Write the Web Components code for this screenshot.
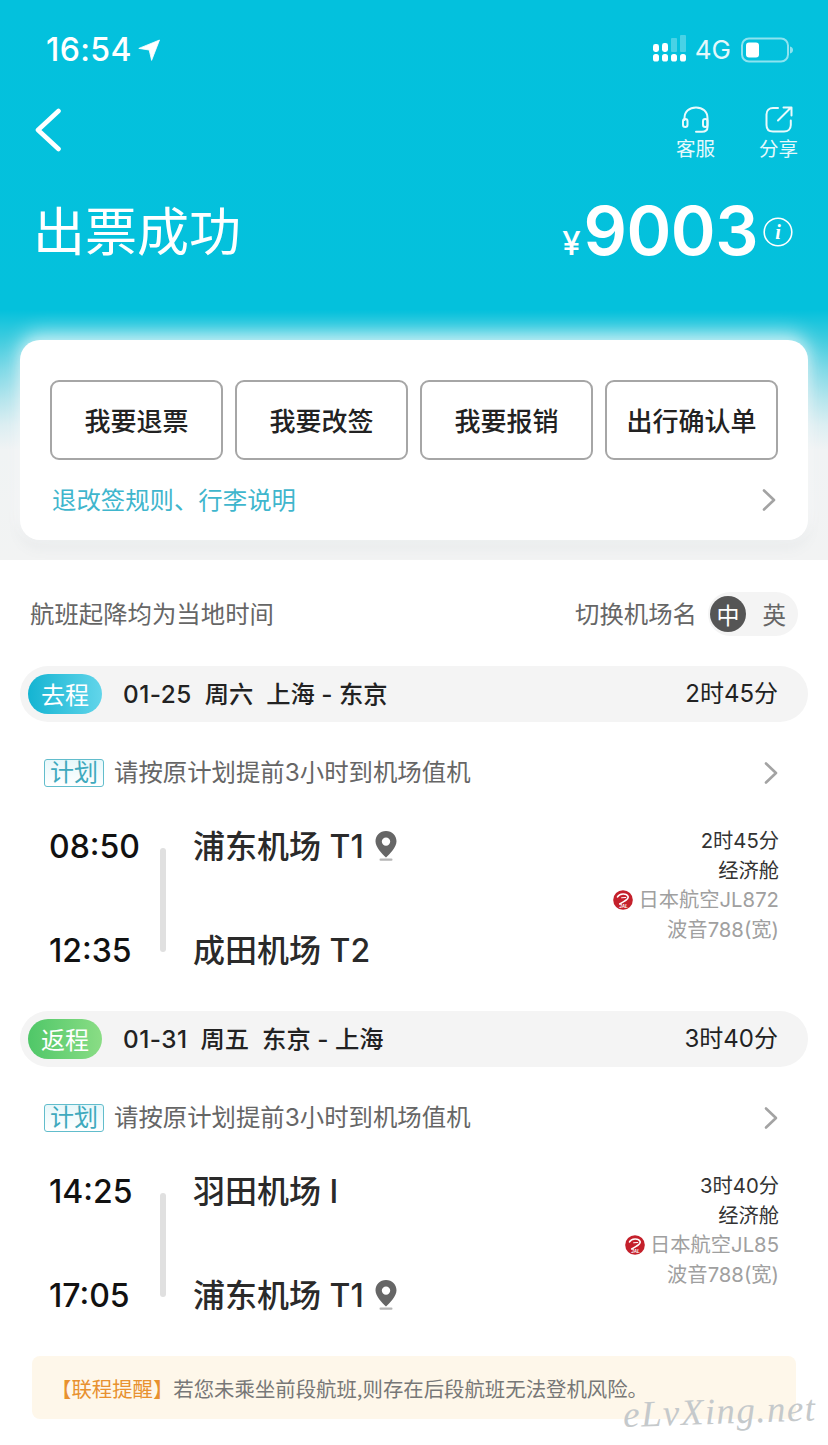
<!DOCTYPE html>
<html lang="zh-CN">
<head>
<meta charset="utf-8">
<title>出票成功</title>
<style>
  html, body { margin: 0; padding: 0; background: #fff; }
  body { width: 828px; height: 1445px; overflow: hidden; position: relative;
         font-family: Inter, "Noto Sans CJK SC", sans-serif; color: #222; }
</style>
</head>
<body>
<order-page>
  <top-hero></top-hero>
  <note-row></note-row>
  <flight-segment kind="去程" date="01-25" week="周六" route="上海 - 东京" total="2时45分"
    dep="08:50" arr="12:35" from="浦东机场 T1" to="成田机场 T2" pin="from"
    airline="日本航空JL872" plane="波音788(宽)"></flight-segment>
  <flight-segment kind="返程" date="01-31" week="周五" route="东京 - 上海" total="3时40分"
    dep="14:25" arr="17:05" from="羽田机场 I" to="浦东机场 T1" pin="to"
    airline="日本航空JL85" plane="波音788(宽)"></flight-segment>
  <notice-box label="【联程提醒】">若您未乘坐前段航班,则存在后段航班无法登机风险。</notice-box>
</order-page>
<water-mark>eLvXing.net</water-mark>

<script>
(function () {
  const CHEVRON = '<svg width="16" height="24" viewBox="0 0 16 24" fill="none" stroke="#a3a3a3" stroke-width="2.6" stroke-linecap="round" stroke-linejoin="round"><path d="M3 2.5 L13 12 L3 21.5"/></svg>';
  const PIN = '<svg width="24" height="32" viewBox="0 0 24 32"><path fill="#666" fill-rule="evenodd" d="M12 1C5.9 1 1.5 5.6 1.5 11.2 1.5 17.4 8 23.6 12 27.5 16 23.6 22.5 17.4 22.5 11.2 22.5 5.6 18.1 1 12 1Zm0 6.4a4.2 4.2 0 1 1 0 8.4 4.2 4.2 0 0 1 0-8.4Z"/><rect x="5.5" y="28.6" width="13" height="2.2" rx="1.1" fill="#b5b5b5"/></svg>';
  const JAL = '<svg width="20" height="20" viewBox="0 0 22 22"><circle cx="11" cy="11" r="10.8" fill="#c4202b"/><path fill="none" stroke="#fff" stroke-width="1.8" stroke-linecap="round" d="M5 7.6C7 3.6 15 3.2 16.6 7.2 17.8 10.8 11.6 12.4 7.4 15.4"/><path fill="none" stroke="#fff" stroke-width="1.2" stroke-linecap="round" d="M9.5 8.6 14 8.2"/><text x="11.6" y="19.4" text-anchor="middle" font-family="Liberation Sans" font-style="italic" font-weight="700" font-size="5" fill="#fff">JAL</text></svg>';

  class OrderPage extends HTMLElement {
    constructor() {
      super();
      const root = this.attachShadow({ mode: 'open' });
      root.innerHTML = `
        <style>:host{display:block;width:828px}</style>
        <slot></slot>`;
    }
  }

  class TopHero extends HTMLElement {
    constructor() {
      super();
      const root = this.attachShadow({ mode: 'open' });
      root.innerHTML = `
        <style>
          :host{
            display:block; height:560px; box-sizing:border-box; color:#fff; overflow:hidden;
            background:linear-gradient(180deg,#03c1dd 0,#04c1dc 310px,#40ccdf 340px,#7fd9e7 370px,#b5e5ed 400px,#dbeef2 425px,#f0f3f4 450px,#f2f3f3 560px);
          }
          .status{height:88px;display:flex;align-items:flex-start;justify-content:space-between;padding:33px 34px 0 46px;box-sizing:border-box}
          .left{display:flex;align-items:center;gap:6px}
          .clock{font:500 32px/34px Inter,sans-serif;letter-spacing:.4px}
          .right{display:flex;align-items:center}
          .right .sig{margin-top:-3px}
          .net{font:400 26px/32px Inter,sans-serif;margin:1px 10px 0 9px;color:#e4f8fb}
          .nav{height:82px;display:flex;justify-content:space-between;padding:0 30px 0 34px}
          .back{margin-top:20px}
          .tools{display:flex;gap:44px;padding-top:18px}
          .tool{display:flex;flex-direction:column;align-items:center;width:39px;font:400 19.5px/24px "Noto Sans CJK SC",sans-serif;color:#e6f9fc}
          .tool svg{margin-bottom:2px}
          .head{height:62px;margin-top:30px;display:flex;justify-content:space-between;align-items:center;padding:0 35px 0 33px}
          h1{margin:-4px 0 0;font:400 52px/62px "Noto Sans CJK SC",sans-serif}
          .price{display:flex;align-items:baseline;font-family:Inter,sans-serif;font-weight:600}
          .yen{font-size:33px;margin-right:3px;font-weight:500}
          .num{font-size:68px;line-height:62px;letter-spacing:-.5px}
          .info{align-self:center;margin-left:5px;margin-top:2px}
          .card{
            margin:78px 20px 0; height:200px; box-sizing:border-box; padding:40px 30px 0;
            background:#fff; border-radius:20px; color:#222;
            box-shadow:0 -8px 20px rgba(255,255,255,.6), 0 0 14px rgba(255,255,255,.35), 0 8px 14px rgba(120,130,135,.07);
          }
          .btns{display:flex;gap:12px}
          .more{display:flex;justify-content:space-between;align-items:center;margin-top:22px;padding:0 0 0 2px;height:36px;font:400 24.4px/36px "Noto Sans CJK SC",sans-serif;color:#3fb6cd}
          .more span{margin-top:-2px}
          .more svg{margin-right:1px}
        </style>
        <div class="status">
          <div class="left">
            <span class="clock">16:54</span>
            <svg width="22" height="22" viewBox="0 0 22 22"><path fill="#fff" d="M21.5 1 .8 9.4 11.2 11 13.6 21.4Z" stroke="#fff" stroke-width=".8" stroke-linejoin="round"/></svg>
          </div>
          <div class="right">
            <svg class="sig" width="33" height="27" viewBox="0 0 33 27" fill="#fff">
              <rect x="0" y="9" width="6" height="8" rx="2.4"/><rect x="9" y="8" width="6" height="9" rx="2.4"/>
              <rect x="18" y="3" width="6" height="14" rx="1" opacity=".28"/><rect x="27" y="0" width="6" height="17" rx="1" opacity=".28"/>
              <rect x="0" y="19" width="6" height="7.5" rx="2.6"/><rect x="9" y="19" width="6" height="7.5" rx="2.6"/>
              <rect x="18" y="19" width="6" height="7.5" rx="2.6"/><rect x="27" y="19" width="6" height="7.5" rx="2.6"/>
            </svg>
            <span class="net">4G</span>
            <svg width="53" height="26" viewBox="0 0 53 26">
              <rect x="1" y="1.5" width="46" height="23" rx="7" fill="none" stroke="#fff" stroke-opacity=".55" stroke-width="2"/>
              <rect x="5" y="5.5" width="13" height="15" rx="3" fill="#fff"/>
              <path d="M49 9.5c2 .6 3 1.8 3 3.5s-1 2.9-3 3.5Z" fill="#fff" fill-opacity=".55"/>
            </svg>
          </div>
        </div>
        <div class="nav">
          <svg class="back" width="30" height="44" viewBox="0 0 30 44" fill="none" stroke="#fff" stroke-width="4.6" stroke-linecap="round" stroke-linejoin="round"><path d="M24.5 3 4 22 24.5 41"/></svg>
          <div class="tools">
            <div class="tool">
              <svg width="30" height="28" viewBox="0 0 30 28" fill="none" stroke="#eafafc" stroke-width="2" stroke-linecap="round"><path d="M3.5 14V12C3.5 5.6 8.4 1.5 15 1.5S26.5 5.6 26.5 12V21C26.5 24 24.5 25.8 21 25.8H15"/><rect x="2" y="13" width="4.5" height="8" rx="2.2"/><rect x="22" y="13" width="4.5" height="8" rx="2.2"/></svg>
              <span>客服</span>
            </div>
            <div class="tool">
              <svg width="30" height="28" viewBox="0 0 30 28" fill="none" stroke="#eafafc" stroke-width="2" stroke-linecap="round" stroke-linejoin="round"><path d="M14 2H9C5.2 2 2.5 4.7 2.5 8.5V19C2.5 23 5 25.5 9 25.5H20C24 25.5 26.8 23 26.8 19V14.5"/><path d="M14 14.5 27 1.5M19.5 1.5H27.5V9.5"/></svg>
              <span>分享</span>
            </div>
          </div>
        </div>
        <div class="head">
          <h1>出票成功</h1>
          <div class="price">
            <span class="yen">¥</span><span class="num">9003</span>
            <svg class="info" width="30" height="30" viewBox="0 0 30 30"><circle cx="15" cy="15" r="13.8" fill="none" stroke="#fff" stroke-width="1.6"/><text x="15" y="22" text-anchor="middle" font-family="Liberation Serif" font-style="italic" font-weight="700" font-size="20" fill="#fff">i</text></svg>
          </div>
        </div>
        <div class="card">
          <div class="btns">
            <action-button>我要退票</action-button>
            <action-button>我要改签</action-button>
            <action-button>我要报销</action-button>
            <action-button>出行确认单</action-button>
          </div>
          <div class="more"><span>退改签规则、行李说明</span>${CHEVRON}</div>
        </div>`;
    }
  }

  class ActionButton extends HTMLElement {
    constructor() {
      super();
      const root = this.attachShadow({ mode: 'open' });
      root.innerHTML = `
        <style>
          :host{
            display:flex; width:173px; height:80px; box-sizing:border-box;
            align-items:center; justify-content:center;
            border:2px solid #a6a6a6; border-radius:9px; background:#fff;
            font:500 26px/1 "Noto Sans CJK SC",sans-serif; color:#222;
          }
        </style>
        <slot></slot>`;
    }
  }

  class NoteRow extends HTMLElement {
    constructor() {
      super();
      const root = this.attachShadow({ mode: 'open' });
      root.innerHTML = `
        <style>
          :host{
            display:flex; justify-content:space-between; align-items:center;
            height:44px; margin-top:32px; margin-bottom:30px; padding:0 30px;
            font:400 24.4px/42px "Noto Sans CJK SC",sans-serif; color:#666;
          }
          .txt{margin-bottom:2px}
          .r{display:flex;align-items:center;gap:11px}
          .sw{display:flex;align-items:center;width:90px;height:44px;box-sizing:border-box;padding:0 12px 0 2px;justify-content:space-between;background:#f4f4f4;border-radius:22px}
          .on{width:36px;height:36px;border-radius:50%;background:#555;color:#fff;text-align:center;font-size:23px;line-height:36px}
          .off{font-size:23.5px;color:#666}
        </style>
        <span class="txt">航班起降均为当地时间</span>
        <div class="r"><span class="txt">切换机场名</span>
          <div class="sw"><span class="on">中</span><span class="off">英</span></div>
        </div>`;
    }
  }

  class FlightSegment extends HTMLElement {
    connectedCallback() {
      const a = n => this.getAttribute(n) || '';
      const back = a('kind') === '返程';
      const root = this.attachShadow({ mode: 'open' });
      root.innerHTML = `
        <style>
          :host{display:block;height:345px}
          .bar{
            display:flex; align-items:center; height:56px; margin:0 20px; padding:0 30px 0 8px;
            background:#f4f4f4; border-radius:28px; box-sizing:border-box; color:#222;
            font:500 24.3px/58px Inter,"Noto Sans CJK SC",sans-serif;
          }
          .kind{
            width:74px;height:40px;border-radius:20px;color:#fff;text-align:center;
            font:400 24px/40px "Noto Sans CJK SC",sans-serif;margin-right:21px;
            background:linear-gradient(90deg,${back ? '#4fc768,#8add85' : '#14b4d2,#62d5ea'});
          }
          .bar b{font-weight:500;white-space:pre}
          .bar i{font-style:normal;letter-spacing:.5px}
          .total{margin-left:auto;font-weight:400;font-size:24px}
          .plan{
            display:flex; align-items:center; height:30px; margin:36px 49px 0 44px;
            font:400 24.4px/30px Inter,"Noto Sans CJK SC",sans-serif; color:#666;
          }
          .plan .say{margin-bottom:2px}
          .tag{
            width:60px;height:28px;box-sizing:border-box;border:1px solid #62bdcc;border-radius:3px;
            background:linear-gradient(180deg,#e6f7fa,#fff);color:#3fa9bd;text-align:center;
            font-size:24px;line-height:26px;margin-right:10px;
          }
          .plan svg{margin-left:auto}
          .grid{
            display:grid; grid-template-columns:111px 6px 1fr auto; grid-template-rows:40px 40px;
            row-gap:64px; margin-top:39px; padding:0 49px;
          }
          .t{font:500 32px/40px Inter,sans-serif;color:#111}
          .line{grid-column:2;grid-row:1/3;width:6px;height:104px;margin-top:21px;border-radius:3px;background:#e0e0e0}
          .ap{
            grid-column:3;display:flex;align-items:center;gap:10px;padding-left:27px;margin-top:-1px;
            font:500 32px/40px Inter,"Noto Sans CJK SC",sans-serif;color:#2a2a2a;
          }
          .ap svg{margin-bottom:1px}
          .meta{
            grid-column:4;grid-row:1/3;text-align:right;margin-top:-1px;
            font:400 20.3px/29.6px Inter,"Noto Sans CJK SC",sans-serif;color:#333;
          }
          .meta .g{color:#a0a0a0}
          .air{display:flex;align-items:center;justify-content:flex-end;gap:5px}
        </style>
        <div class="bar">
          <span class="kind">${a('kind')}</span>
          <b><i>${a('date')}</i>  ${a('week')}  ${a('route')}</b>
          <span class="total">${a('total')}</span>
        </div>
        <div class="plan"><span class="tag">计划</span><span class="say">请按原计划提前3小时到机场值机</span>${CHEVRON}</div>
        <div class="grid">
          <div class="t" style="grid-column:1;grid-row:1">${a('dep')}</div>
          <div class="t" style="grid-column:1;grid-row:2">${a('arr')}</div>
          <div class="line"></div>
          <div class="ap" style="grid-row:1">${a('from')}${a('pin') === 'from' ? PIN : ''}</div>
          <div class="ap" style="grid-row:2">${a('to')}${a('pin') === 'to' ? PIN : ''}</div>
          <div class="meta">
            <div>${a('total')}</div>
            <div>经济舱</div>
            <div class="g air">${JAL}<span>${a('airline')}</span></div>
            <div class="g">${a('plane')}</div>
          </div>
        </div>`;
    }
  }

  class NoticeBox extends HTMLElement {
    connectedCallback() {
      const root = this.attachShadow({ mode: 'open' });
      root.innerHTML = `
        <style>
          :host{
            display:flex; align-items:center; height:63px; box-sizing:border-box;
            margin:0 32px; padding:2px 0 0 19px; border-radius:8px; background:#fef7ea;
            font:400 20.4px/1 "Noto Sans CJK SC",sans-serif; color:#777;
          }
          b{font-weight:400;color:#e8912f}
        </style>
        <b>${this.getAttribute('label') || ''}</b><slot></slot>`;
    }
  }

  class WaterMark extends HTMLElement {
    constructor() {
      super();
      const root = this.attachShadow({ mode: 'open' });
      root.innerHTML = `
        <style>
          :host{
            position:absolute; left:624px; top:1391px;
            font:italic 400 37px/48px "Liberation Serif",serif; color:#c5c9cb;
            letter-spacing:1.4px; transform:rotate(-2deg); transform-origin:left bottom;
          }
        </style>
        <slot></slot>`;
    }
  }

  customElements.define('order-page', OrderPage);
  customElements.define('top-hero', TopHero);
  customElements.define('action-button', ActionButton);
  customElements.define('note-row', NoteRow);
  customElements.define('flight-segment', FlightSegment);
  customElements.define('notice-box', NoticeBox);
  customElements.define('water-mark', WaterMark);
})();
</script>
</body>
</html>
